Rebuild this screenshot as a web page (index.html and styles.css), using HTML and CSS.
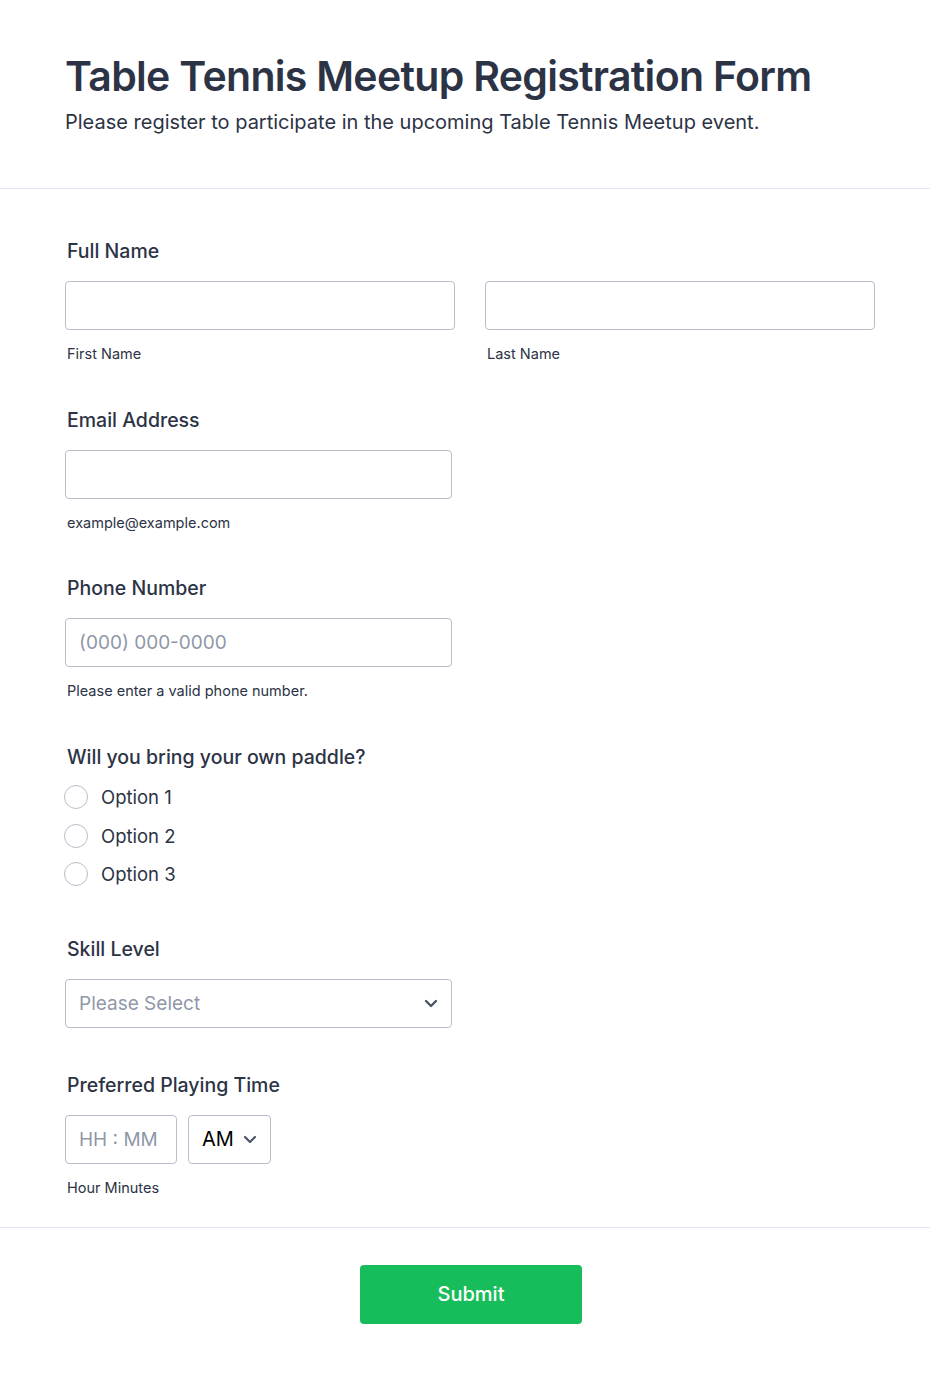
FILE: index.html
```
<!DOCTYPE html>
<html lang="en">
<head>
<meta charset="utf-8">
<title>Table Tennis Meetup Registration Form</title>
<link rel="stylesheet" href="styles.css">
</head>
<body>
<div class="form">
  <header class="header">
    <h1 class="title">Table Tennis Meetup Registration Form</h1>
    <p class="subtitle">Please register to participate in the upcoming Table Tennis Meetup event.</p>
  </header>
  <main class="fields">
    <section class="field">
      <div class="label">Full Name</div>
      <div class="row two">
        <div class="col">
          <input class="input" type="text">
          <div class="sublabel">First Name</div>
        </div>
        <div class="col">
          <input class="input" type="text">
          <div class="sublabel">Last Name</div>
        </div>
      </div>
    </section>
    <section class="field">
      <div class="label">Email Address</div>
      <input class="input half" type="text">
      <div class="sublabel">example@example.com</div>
    </section>
    <section class="field">
      <div class="label">Phone Number</div>
      <input class="input half" type="text" placeholder="(000) 000-0000">
      <div class="sublabel">Please enter a valid phone number.</div>
    </section>
    <section class="field radios-field">
      <div class="label">Will you bring your own paddle?</div>
      <div class="radios">
        <label class="radio"><span class="circle"></span>Option 1</label>
        <label class="radio"><span class="circle"></span>Option 2</label>
        <label class="radio"><span class="circle"></span>Option 3</label>
      </div>
    </section>
    <section class="field select-field">
      <div class="label">Skill Level</div>
      <div class="select half">
        <span class="placeholder">Please Select</span>
        <svg class="chev" width="14" height="9" viewBox="0 0 14 9"><path d="M2 2l5 5 5-5" fill="none" stroke="#4b5568" stroke-width="2.4" stroke-linecap="round" stroke-linejoin="round"/></svg>
      </div>
    </section>
    <section class="field last">
      <div class="label">Preferred Playing Time</div>
      <div class="time-row">
        <div class="time-input"><span class="placeholder">HH : MM</span></div>
        <div class="ampm"><span>AM</span>
          <svg class="chev" width="14" height="9" viewBox="0 0 14 9"><path d="M2 2l5 5 5-5" fill="none" stroke="#4b5568" stroke-width="2.2" stroke-linecap="round" stroke-linejoin="round"/></svg>
        </div>
      </div>
      <div class="sublabel">Hour Minutes</div>
    </section>
  </main>
  <footer class="footer">
    <button class="submit" type="button">Submit</button>
  </footer>
</div>
</body>
</html>
```
FILE: styles.css
```
* { box-sizing: border-box; }
html, body { margin: 0; padding: 0; background: #fff; }
body { font-family: Inter, "Noto Sans", sans-serif; color: #2c3345; }
.header {
  padding: 50px 65px 0;
  height: 189px;
  border-bottom: 1px solid #e3e5f0;
}
.title {
  margin: 0;
  font-size: 41px;
  font-weight: 600;
  line-height: 52px;
  letter-spacing: -0.7px;
  white-space: nowrap;
}
.subtitle {
  margin: 6px 0 0;
  font-size: 20px;
  line-height: 28px;
  font-weight: 400;
}
.fields { padding: 49px 55px 0 65px; }
.field { margin-bottom: 42.5px; }
.radios-field { margin-bottom: 49.5px; }
.select-field { margin-bottom: 44px; }
.field.last { margin-bottom: 0; }
.label {
  font-size: 19.5px;
  font-weight: 500;
  line-height: 26px;
  padding-left: 2px;
  margin-bottom: 17px;
}
.row.two { display: flex; gap: 30px; }
.col { width: 390px; flex: none; }
.input {
  display: block;
  width: 100%;
  height: 49px;
  border: 1px solid #b8bdc9;
  border-radius: 4px;
  font: inherit;
  font-size: 19px;
  padding: 0 13px;
  margin: 0;
  outline: none;
  background: #fff;
}
.input::placeholder { color: #8f97a8; }
.half { width: 387px; }
.sublabel {
  font-size: 14.5px;
  line-height: 20px;
  margin-top: 14px;
  padding-left: 2px;
  color: #2c3345;
}
.radios { display: flex; flex-direction: column; gap: 14.5px; margin-top: -1.5px; }
.radio {
  display: flex;
  align-items: center;
  font-size: 18.5px;
  line-height: 24px;
  gap: 13px;
}
.circle {
  width: 24px;
  height: 24px;
  border: 1px solid #b8bdc9;
  border-radius: 50%;
  flex: none;
  margin-left: -1px;
}
.select {
  height: 49px;
  border: 1px solid #b8bdc9;
  border-radius: 4px;
  display: flex;
  align-items: center;
  justify-content: space-between;
  padding: 0 13px 0 13px;
}
.placeholder { color: #8f97a8; font-size: 19px; }
.time-row { display: flex; gap: 11px; }
.time-input {
  width: 112px;
  height: 49px;
  border: 1px solid #b8bdc9;
  border-radius: 4px;
  display: flex;
  align-items: center;
  padding: 0 13px;
}
.ampm {
  width: 83px;
  height: 49px;
  border: 1px solid #b8bdc9;
  border-radius: 4px;
  display: flex;
  align-items: center;
  justify-content: space-between;
  padding: 0 13px;
  font-size: 20px;
  color: #000;
}
.footer {
  border-top: 1px solid #e3e5f0;
  margin-top: 29px;
  padding: 37px 0 60px;
  display: flex;
  justify-content: center;
}
.submit {
  width: 222px;
  height: 59px;
  background: #18bd5b;
  border: none;
  border-radius: 4px;
  color: #fff;
  font-family: Inter, sans-serif;
  font-size: 20px;
  font-weight: 500;
  margin-left: 12px;
}
```
